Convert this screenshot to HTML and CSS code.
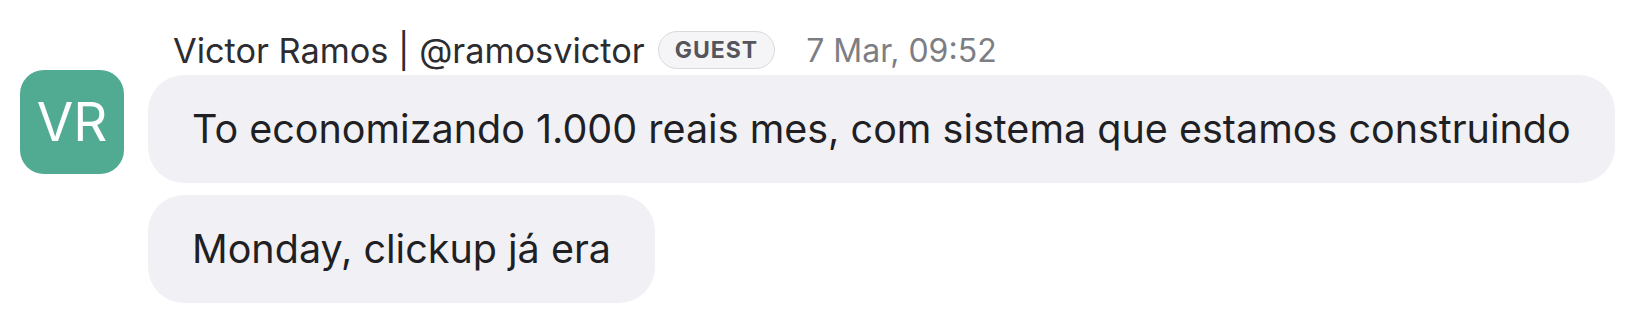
FILE: index.html
```html
<!DOCTYPE html>
<html lang="en">
    <head>
        <meta charset="UTF-8">
        <meta name="viewport" content="width=device-width, initial-scale=1.0">
        <title>Chat message</title>
        <link rel="stylesheet" href="styles.css">
    </head>
    <body>
        <div class="message">
            <div class="avatar">VR</div>
            <div class="content">
                <div class="header">
                    <span class="name">Victor Ramos | @ramosvictor</span>
                    <span class="badge">GUEST</span>
                    <span class="time">7 Mar, 09:52</span>
                </div>
                <div class="bubble">To economizando 1.000 reais mes, com sistema que estamos construindo</div>
                <div class="bubble">Monday, clickup já era</div>
            </div>
        </div>
    </body>
</html>
```

FILE: styles.css
```css
body {
    margin: 0;
    background: #fff;
    font-family: Inter, "Liberation Sans", sans-serif;
    color: #1f1f24;
}

.message {
    display: flex;
    gap: 24px;
    padding: 30px 20px 0 20px;
}

.avatar {
    width: 104px;
    height: 104px;
    margin-top: 40px;
    flex-shrink: 0;
    border-radius: 24px;
    background: #51ab93;
    color: #fff;
    font-size: 53px;
    display: flex;
    align-items: center;
    justify-content: center;
}

.content {
    display: flex;
    flex-direction: column;
    align-items: flex-start;
}

.header {
    display: flex;
    align-items: center;
    height: 40px;
    margin-bottom: 5px;
    padding-left: 25px;
    white-space: nowrap;
}

.name {
    font-size: 34.3px;
    color: #2c2c31;
}

.badge {
    margin-left: 13px;
    height: 36px;
    padding: 0 16px;
    display: flex;
    align-items: center;
    border: 1px solid #d9d9de;
    border-radius: 20px;
    background: #f5f5f7;
    color: #55565c;
    font-size: 23px;
    font-weight: 700;
    letter-spacing: 1px;
}

.time {
    margin-left: 31px;
    font-size: 32px;
    color: #7d7e84;
}

.bubble {
    background: #f1f1f5;
    border-radius: 36px;
    padding: 27px 44px;
    font-size: 39.5px;
    line-height: 54px;
    margin-bottom: 12px;
    white-space: nowrap;
}
```
